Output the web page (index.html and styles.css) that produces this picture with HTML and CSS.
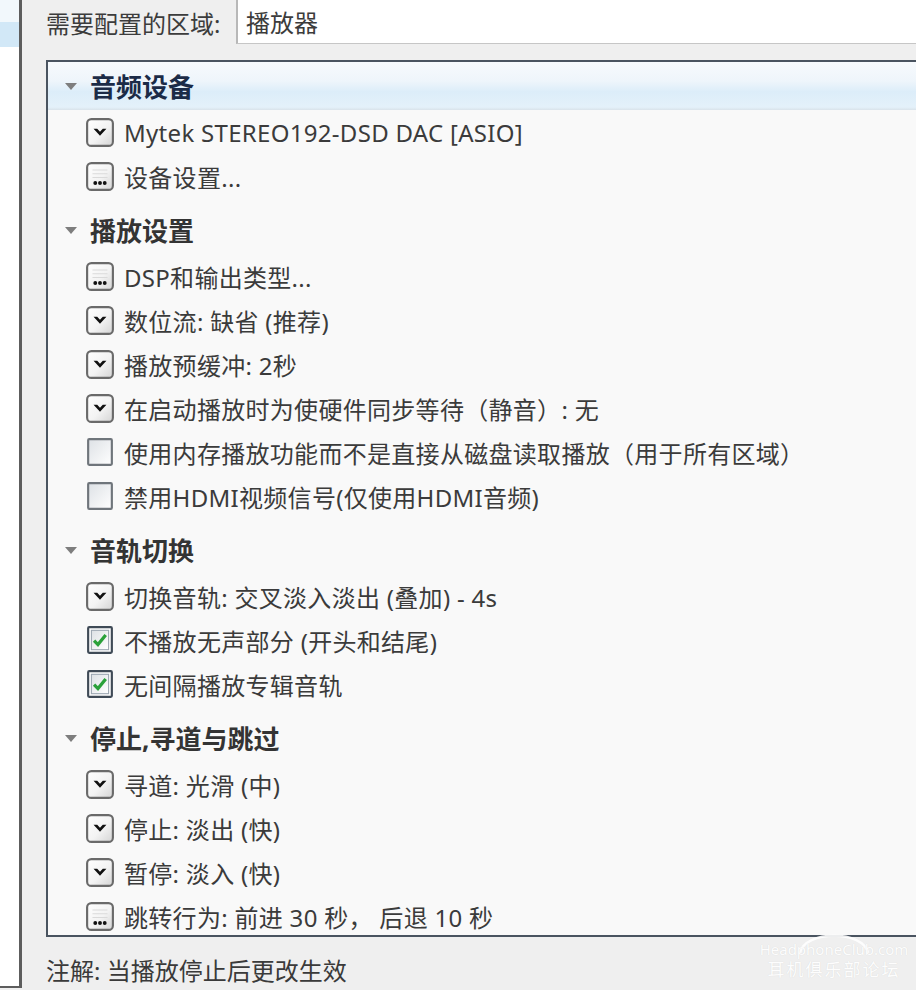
FILE: index.html
```html
<!DOCTYPE html>
<html lang="zh-CN">

<head>
    <meta charset="UTF-8">
    <meta name="viewport" content="width=device-width, initial-scale=1.0">
    <title>区域设置</title>
    <link rel="stylesheet" href="styles.css">
</head>

<body>
    <svg class="defs" width="0" height="0" aria-hidden="true">
        <defs>
            <linearGradient id="btnFill" x1="0" y1="0" x2="1" y2="1">
                <stop offset="0" stop-color="#ffffff" />
                <stop offset="0.55" stop-color="#f3f3f3" />
                <stop offset="1" stop-color="#d4d4d4" />
            </linearGradient>
            <linearGradient id="boxFill" x1="0" y1="0" x2="1" y2="1">
                <stop offset="0" stop-color="#dde1e5" />
                <stop offset="1" stop-color="#ffffff" />
            </linearGradient>
            <symbol id="i-drop" viewBox="0 0 26 27">
                <rect x="1" y="1" width="24" height="25" rx="4" fill="url(#btnFill)" stroke="#6a6a6a" stroke-width="2" />
                <path d="M7 10 h3.4 l2.6 2.8 l2.6 -2.8 h3.4 l-6 6.6 z" fill="#111" />
            </symbol>
            <symbol id="i-more" viewBox="0 0 26 27">
                <rect x="1" y="1" width="24" height="25" rx="4" fill="url(#btnFill)" stroke="#6a6a6a" stroke-width="2" />
                <path d="M6 7.5 h14 M6 11 h14 M6 14.5 h14" stroke="#dadada" stroke-width="1" />
                <circle cx="8.6" cy="19.6" r="1.8" fill="#111" />
                <circle cx="13" cy="19.6" r="1.8" fill="#111" />
                <circle cx="17.4" cy="19.6" r="1.8" fill="#111" />
            </symbol>
            <symbol id="i-box" viewBox="0 0 24 26">
                <rect x="1" y="1" width="22" height="24" rx="1" fill="url(#boxFill)" stroke="#6f757b" stroke-width="2" />
            </symbol>
            <symbol id="i-check" viewBox="0 0 24 26">
                <rect x="1" y="1" width="22" height="24" rx="1" fill="#fff" stroke="#3f4a56" stroke-width="2" />
                <rect x="4" y="4" width="16" height="18" fill="url(#boxFill)" stroke="#9aa5b0" stroke-width="1" />
                <path d="M6.5 13.5 l3.6 3.8 l7.2 -9" fill="none" stroke="#2aa13a" stroke-width="3" />
            </symbol>
        </defs>
    </svg>

    <div class="window">
        <aside class="zones">
            <div class="zone-top"></div>
            <div class="zone-sel"></div>
        </aside>

        <main class="config">
            <div class="zone-row">
                <span class="zone-label">需要配置的区域:</span>
                <div class="zone-field">播放器</div>
            </div>

            <div class="settings">
                <section class="group">
                    <div class="group-head active"><span class="caret"></span>音频设备</div>
                    <div class="item"><svg class="ico"><use href="#i-drop" /></svg>Mytek STEREO192-DSD DAC [ASIO]</div>
                    <div class="item"><svg class="ico"><use href="#i-more" /></svg>设备设置...</div>
                </section>

                <section class="group">
                    <div class="group-head"><span class="caret"></span>播放设置</div>
                    <div class="item"><svg class="ico"><use href="#i-more" /></svg>DSP和输出类型...</div>
                    <div class="item"><svg class="ico"><use href="#i-drop" /></svg>数位流: 缺省 (推荐)</div>
                    <div class="item"><svg class="ico"><use href="#i-drop" /></svg>播放预缓冲: 2秒</div>
                    <div class="item"><svg class="ico"><use href="#i-drop" /></svg>在启动播放时为使硬件同步等待（静音）: 无</div>
                    <div class="item"><svg class="ico box"><use href="#i-box" /></svg>使用内存播放功能而不是直接从磁盘读取播放（用于所有区域）</div>
                    <div class="item"><svg class="ico box"><use href="#i-box" /></svg>禁用HDMI视频信号(仅使用HDMI音频)</div>
                </section>

                <section class="group">
                    <div class="group-head"><span class="caret"></span>音轨切换</div>
                    <div class="item"><svg class="ico"><use href="#i-drop" /></svg>切换音轨: 交叉淡入淡出 (叠加) - 4s</div>
                    <div class="item"><svg class="ico box"><use href="#i-check" /></svg>不播放无声部分 (开头和结尾)</div>
                    <div class="item"><svg class="ico box"><use href="#i-check" /></svg>无间隔播放专辑音轨</div>
                </section>

                <section class="group">
                    <div class="group-head"><span class="caret"></span>停止,寻道与跳过</div>
                    <div class="item"><svg class="ico"><use href="#i-drop" /></svg>寻道: 光滑 (中)</div>
                    <div class="item"><svg class="ico"><use href="#i-drop" /></svg>停止: 淡出 (快)</div>
                    <div class="item"><svg class="ico"><use href="#i-drop" /></svg>暂停: 淡入 (快)</div>
                    <div class="item"><svg class="ico"><use href="#i-more" /></svg>跳转行为: 前进 30 秒， 后退 10 秒</div>
                </section>
            </div>

            <p class="note">注解: 当播放停止后更改生效</p>
        </main>

        <div class="watermark">
            <svg class="wm-arc" width="80" height="28" viewBox="0 0 80 28">
                <path d="M6 27 C10 4, 70 4, 74 27" fill="none" stroke="#fff" stroke-width="2.5" />
            </svg>
            <span class="wm-site">HeadphoneClub.com</span>
            <span class="wm-name">耳机俱乐部论坛</span>
        </div>
    </div>
</body>

</html>
```

FILE: styles.css
```css
/* Reset */
* {
    margin: 0;
    padding: 0;
    box-sizing: border-box;
}

body {
    font-family: "Noto Sans", "Noto Sans CJK SC", sans-serif;
    background-color: #efefef;
    color: #3a3a3a;
    overflow: hidden;
}

.defs {
    position: absolute;
}

.window {
    position: relative;
    display: flex;
    width: 916px;
    height: 990px;
    overflow: hidden;
}

/* Left zone list */
.zones {
    flex: none;
    width: 22px;
    height: 988px;
    background: #ffffff;
    border-right: 3px solid #5d5d5d;
    border-bottom: 2px solid #5d5d5d;
}

.zone-top {
    height: 22px;
    background: #f2f8fc;
}

.zone-sel {
    height: 25px;
    background: #d2e8f7;
}

/* Main config area */
.config {
    flex: 1;
    min-width: 0;
    padding-left: 24px;
    display: flex;
    flex-direction: column;
}

.zone-row {
    display: flex;
    height: 44px;
}

.zone-label {
    width: 190px;
    display: flex;
    align-items: center;
    font-size: 24px;
    color: #3c3c3c;
}

.zone-field {
    flex: 1;
    display: flex;
    align-items: center;
    padding-left: 8px;
    background: #ffffff;
    border-left: 2px solid #b8b8b8;
    border-bottom: 1px solid #c6c6c6;
    font-size: 24px;
    color: #3c3c3c;
}

/* Settings list */
.settings {
    margin-top: 16px;
    height: 877px;
    background: #f9f9f9;
    border: 2px solid #4a5460;
    border-right: none;
    overflow: hidden;
}

.group + .group {
    margin-top: 8px;
}

.group-head {
    height: 48px;
    display: flex;
    align-items: center;
    padding-left: 17px;
    font-size: 26px;
    font-weight: bold;
    color: #343434;
}

.group-head.active {
    color: #1b2b47;
    background: linear-gradient(#f7fafd 0%, #eef5fb 40%, #dcedf9 62%, #e4f1fa 94%, #d9e3ea 100%);
}

.caret {
    width: 0;
    height: 0;
    margin-right: 13px;
    border-left: 6px solid transparent;
    border-right: 6px solid transparent;
    border-top: 7px solid #7e7e7e;
}

.item {
    height: 44px;
    display: flex;
    align-items: center;
    gap: 10px;
    padding-left: 38px;
    font-size: 24px;
    letter-spacing: 0.3px;
    color: #3b3b3b;
    white-space: nowrap;
}

.ico {
    flex: none;
    width: 28px;
    height: 29px;
}

.ico.box {
    width: 26px;
    height: 28px;
    margin: 0 1px;
}

/* Footer note */
.note {
    padding-top: 15px;
    font-size: 24px;
    color: #3a3a3a;
}

/* Forum watermark */
.watermark {
    position: absolute;
    right: 4px;
    bottom: 8px;
    width: 156px;
    display: flex;
    flex-direction: column;
    align-items: center;
    color: #ffffff;
    text-shadow: 0 0 1px rgba(0, 0, 0, 0.12);
    opacity: 0.9;
}

.wm-arc {
    margin-bottom: -14px;
}

.wm-site {
    font-size: 15px;
    line-height: 18px;
}

.wm-name {
    font-size: 17px;
    line-height: 24px;
    letter-spacing: 2px;
}
```
